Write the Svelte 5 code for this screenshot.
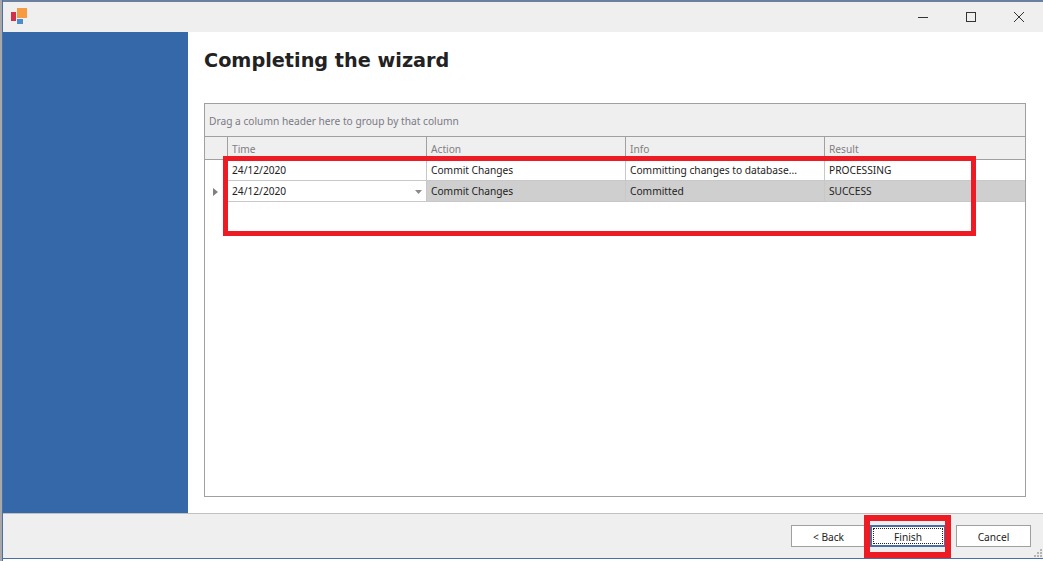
<script lang="ts">
    const columns = ['Time', 'Action', 'Info', 'Result'];
    const rows = [
        { time: '24/12/2020', action: 'Commit Changes', info: 'Committing changes to database...', result: 'PROCESSING', selected: false },
        { time: '24/12/2020', action: 'Commit Changes', info: 'Committed', result: 'SUCCESS', selected: true }
    ];
</script>

<div class="window">
    <header class="titlebar">
        <svg class="logo" width="18" height="18" viewBox="0 0 18 18">
            <rect x="0" y="4" width="5" height="9" fill="#d1314b" />
            <rect x="6" y="0" width="10" height="10" fill="#f79b42" />
            <rect x="6" y="11" width="6" height="5" fill="#4b8ccb" />
        </svg>
        <div class="controls">
            <svg width="48" height="30" viewBox="0 0 48 30">
                <path d="M19 15.5h10" stroke="#333" fill="none" />
            </svg>
            <svg width="48" height="30" viewBox="0 0 48 30">
                <rect x="19.5" y="10.5" width="9" height="9" stroke="#333" fill="none" />
            </svg>
            <svg width="48" height="30" viewBox="0 0 48 30">
                <path d="M19 10l10 10M29 10l-10 10" stroke="#333" fill="none" />
            </svg>
        </div>
    </header>

    <div class="middle">
        <aside class="side"></aside>
        <main class="content">
            <h1>Completing the wizard</h1>
            <section class="grid">
                <div class="group">Drag a column header here to group by that column</div>
                <div class="row head">
                    <div class="indicator"></div>
                    {#each columns as col}
                        <div class="cell">{col}</div>
                    {/each}
                </div>
                {#each rows as row}
                    <div class="row body" class:selected={row.selected}>
                        <div class="indicator">
                            {#if row.selected}
                                <svg width="5" height="8" viewBox="0 0 5 8"><path d="M0 0l5 4-5 4z" fill="#808080" /></svg>
                            {/if}
                        </div>
                        <div class="cell time">
                            {row.time}
                            {#if row.selected}
                                <svg class="combo" width="7" height="4" viewBox="0 0 7 4"><path d="M0 0h7l-3.5 4z" fill="#8a8a8a" /></svg>
                            {/if}
                        </div>
                        <div class="cell">{row.action}</div>
                        <div class="cell">{row.info}</div>
                        <div class="cell">{row.result}</div>
                    </div>
                {/each}
            </section>
        </main>
    </div>

    <footer class="footer">
        <button class="btn">&lt; Back</button>
        <button class="btn finish"><span>Finish</span></button>
        <button class="btn">Cancel</button>
        <svg class="grip" width="9" height="9" viewBox="0 0 9 9" fill="#b4b4b4">
            <rect x="6" y="0" width="2" height="2" />
            <rect x="3" y="3" width="2" height="2" />
            <rect x="6" y="3" width="2" height="2" />
            <rect x="0" y="6" width="2" height="2" />
            <rect x="3" y="6" width="2" height="2" />
            <rect x="6" y="6" width="2" height="2" />
        </svg>
    </footer>

    <div class="mark mark-rows"></div>
    <div class="mark mark-finish"></div>
</div>

<style>
    :global(body) {
        margin: 0;
        background: #fff;
    }

    .window {
        position: relative;
        width: 1043px;
        height: 561px;
        box-sizing: border-box;
        display: flex;
        flex-direction: column;
        padding-bottom: 2px;
        font-family: "Noto Sans", "Open Sans", sans-serif;
        font-size: 10.2px;
        color: #222;
        background: linear-gradient(to right, #a8a8a8 2px, #4a6ea5 2px, #4a6ea5 3px, #fff 3px);
        overflow: hidden;
    }

    .titlebar {
        margin-left: 3px;
        height: 32px;
        box-sizing: border-box;
        border-top: 2px solid #6b7f9f;
        background: #efefef;
        display: flex;
        align-items: center;
        justify-content: space-between;
        padding-left: 8px;
    }

    .logo {
        display: block;
    }

    .controls {
        display: flex;
        align-items: center;
        height: 30px;
    }

    .controls svg {
        display: block;
    }

    .middle {
        flex: 1;
        min-height: 0;
        margin-left: 3px;
        display: flex;
    }

    .side {
        width: 185px;
        background: #3468a8;
    }

    .content {
        flex: 1;
        padding: 0 17px 16px 16px;
        display: flex;
        flex-direction: column;
        background: #fff;
    }

    h1 {
        margin: 0;
        height: 71px;
        padding-top: 17px;
        box-sizing: border-box;
        font-family: "DejaVu Sans", sans-serif;
        font-size: 19.25px;
        font-weight: 700;
        line-height: 24px;
        color: #222;
    }

    .grid {
        flex: 1;
        border: 1px solid #a0a0a0;
        display: flex;
        flex-direction: column;
    }

    .group {
        height: 33px;
        padding: 2px 0 0 4px;
        box-sizing: border-box;
        display: flex;
        align-items: center;
        background: #efefef;
        color: #7a7a85;
        border-bottom: 1px solid #a0a0a0;
    }

    .row {
        display: grid;
        grid-template-columns: 22px 199px 199px 199px 1fr;
    }

    .head {
        height: 23px;
        background: #efefef;
        color: #808080;
        border-bottom: 1px solid #a0a0a0;
        box-sizing: border-box;
    }

    .head .cell {
        border-left: 1px solid #a0a0a0;
        padding-top: 2px;
    }

    .body {
        height: 21px;
    }

    .body .cell {
        border-bottom: 1px solid #c8c8c8;
    }

    .cell {
        display: flex;
        align-items: center;
        box-sizing: border-box;
        padding-left: 4px;
        border-left: 1px solid #c8c8c8;
        white-space: nowrap;
        overflow: hidden;
    }

    .indicator {
        display: flex;
        align-items: center;
        justify-content: center;
        padding-right: 1px;
    }

    .time {
        position: relative;
        background: #fff;
    }

    .combo {
        position: absolute;
        right: 4px;
        top: 9px;
    }

    .selected .cell:not(.time) {
        background: #cfcfcf;
    }

    .footer {
        margin-left: 3px;
        height: 46px;
        box-sizing: border-box;
        position: relative;
        background: #efefef;
        border-top: 1px solid #c0c0c0;
        border-bottom: 1px solid #4a6ea5;
        display: flex;
        align-items: center;
        justify-content: flex-end;
        gap: 4px;
        padding-right: 12px;
    }

    .btn {
        width: 75px;
        height: 22px;
        padding: 1px 0 0;
        box-sizing: border-box;
        border: 1px solid #a0a0a0;
        background: #fff;
        font: inherit;
        color: #222;
    }

    .finish {
        width: 76px;
        margin-right: 6px;
        padding: 1px;
        border: 2px solid #4a6ea5;
    }

    .finish span {
        display: flex;
        align-items: center;
        justify-content: center;
        height: 100%;
        padding-top: 1px;
        box-sizing: border-box;
        border: 1px dotted #222;
    }

    .grip {
        position: absolute;
        right: 0;
        bottom: 0;
    }

    .mark {
        position: absolute;
        box-sizing: border-box;
        border-style: solid;
        border-color: #ed1c24;
        pointer-events: none;
    }

    .mark-rows {
        left: 223px;
        top: 156px;
        width: 753px;
        height: 80px;
        border-width: 5px;
    }

    .mark-finish {
        left: 864px;
        top: 515px;
        width: 87px;
        height: 43px;
        border-width: 6px;
    }
</style>
